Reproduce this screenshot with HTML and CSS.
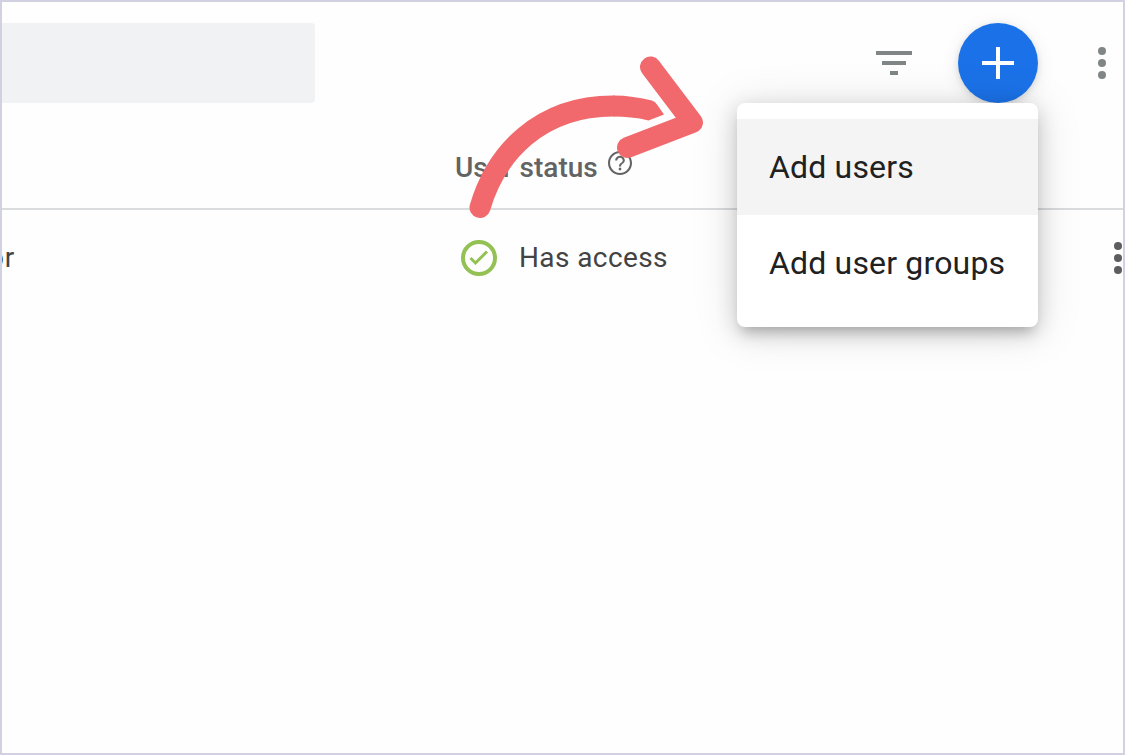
FILE: index.html
```
<!DOCTYPE html>
<html lang="en">
<head>
    <meta charset="UTF-8">
    <title>User management</title>
    <link rel="stylesheet" href="styles.css">
</head>
<body>
<div class="page">
    <div class="toolbar">
        <div class="search"></div>
        <div class="actions">
            <svg class="filter" width="36" height="24" viewBox="0 0 36 24">
                <path d="M0 0h36v4H0zM6 10h24v4H6zM14 20h8v4h-8z"/>
            </svg>
            <div class="add">
                <svg width="32" height="32" viewBox="0 0 32 32">
                    <path d="M14 0h4v14h14v4H18v14h-4V18H0v-4h14z"/>
                </svg>
                <ul class="menu">
                    <li class="current">Add users</li>
                    <li>Add user groups</li>
                </ul>
            </div>
            <svg class="more" width="8" height="32" viewBox="0 0 8 32">
                <circle cx="4" cy="4" r="4"/>
                <circle cx="4" cy="16" r="4"/>
                <circle cx="4" cy="28" r="4"/>
            </svg>
        </div>
    </div>
    <div class="row head">
        <div class="role"></div>
        <div class="status">
            <span class="title">User status</span>
            <svg class="help" width="24" height="24" viewBox="2 2 20 20">
                <path d="M11 18h2v-2h-2v2zm1-16C6.480 2 2 6.480 2 12s4.480 10 10 10 10-4.480 10-10S17.520 2 12 2zm0 18.300c-4.580 0-8.300-3.720-8.300-8.300s3.720-8.300 8.300-8.300 8.300 3.720 8.300 8.300-3.720 8.300-8.300 8.300zm0-14.300c-2.210 0-4 1.790-4 4h1.700c0-1.270 1.030-2.300 2.300-2.300s2.300 1.030 2.300 2.300c0 2-3.150 1.750-3.150 5h1.700c0-2.250 3.150-2.500 3.150-5 0-2.210-1.790-4-4-4z"/>
            </svg>
        </div>
    </div>
    <div class="row user">
        <div class="role"><span>or</span></div>
        <div class="status">
            <svg class="check" width="36" height="36" viewBox="0 0 36 36">
                <circle cx="18" cy="18" r="16"/>
                <path d="M9.500 18l5 5L26 11.500"/>
            </svg>
            <span class="access">Has access</span>
        </div>
        <svg class="more" width="8" height="32" viewBox="0 0 8 32">
            <circle cx="4" cy="4" r="4"/>
            <circle cx="4" cy="16" r="4"/>
            <circle cx="4" cy="28" r="4"/>
        </svg>
    </div>
    <!-- arrow pointing at the menu -->
    <svg class="arrow" width="240" height="166" viewBox="466 54 240 166">
        <path class="line" d="M480 207.500C496 153 540 106 613 106"/>
        <path class="end" d="M613 95.500C627 95.500 640 97.500 652 100.500Q655 101.500 657 104.500L664 114.500L648.500 120.500C637 117.500 625 116.500 613 116.500Z"/>
        <path class="line" d="M650.500 67L692.500 122.500L627.500 147.500"/>
    </svg>
</div>
</body>
</html>
```

FILE: styles.css
```
body, ul, li {
    margin: 0;
    padding: 0;
    list-style: none;
}

svg {
    display: block;
    flex: none;
}

.page {
    box-sizing: border-box;
    position: relative;
    width: 1125px;
    height: 755px;
    border: 2px solid #d2d1e1;
    background: #fefefe;
    overflow: hidden;
    font-family: Roboto, "Liberation Sans", sans-serif;
    font-size: 28px;
    color: #434343;
}

.toolbar {
    display: flex;
    justify-content: space-between;
    padding-top: 21px;
}

.search {
    width: 313px;
    height: 80px;
    border-radius: 0 4px 4px 0;
    background: #f1f2f4;
}

.actions {
    display: flex;
    align-items: center;
    height: 80px;
    padding-right: 17px;
    fill: #808586;
}

.filter {
    margin-right: 46px;
}

.add {
    display: flex;
    align-items: center;
    justify-content: center;
    position: relative;
    width: 80px;
    height: 80px;
    margin-right: 60px;
    border-radius: 50%;
    background: #1b72e8;
    fill: #fff;
    box-shadow: 0 2px 8px -2px rgba(0, 0, 0, .2), 0 4px 20px rgba(0, 0, 0, .08);
}

.menu {
    position: absolute;
    top: 80px;
    right: 0;
    width: 301px;
    padding: 16px 0;
    border-radius: 8px;
    background: #fff;
    box-shadow: 0 10px 12px -6px rgba(0, 0, 0, .2), 0 6px 20px 2px rgba(0, 0, 0, .14), 0 4px 44px 4px rgba(0, 0, 0, .1);
}

.menu li {
    height: 96px;
    padding-left: 32px;
    font-size: 32px;
    line-height: 96px;
    letter-spacing: .17px;
    color: #212121;
    white-space: nowrap;
}

.menu .current {
    background: #f4f4f4;
}

.row {
    display: flex;
    align-items: center;
}

.head {
    height: 105px;
    border-bottom: 2px solid #dadbdd;
}

.user {
    height: 96px;
    fill: #5c5d60;
}

.role {
    width: 453px;
}

.role span {
    display: block;
    margin: -2px 0 0 -14px;
    letter-spacing: .8px;
}

.status {
    display: flex;
    align-items: center;
    width: 659px;
}

.head .status {
    padding-top: 24px;
}

.title {
    font-weight: 500;
    color: #636363;
}

.help {
    margin: -9px 0 0 10px;
    fill: #636363;
}

.check {
    margin: 0 22px 0 6px;
    fill: none;
    stroke: #93c154;
    stroke-width: 4;
}

.check path {
    stroke-width: 3;
}

.access {
    margin-top: -2px;
    letter-spacing: .4px;
}

.arrow {
    position: absolute;
    left: 464px;
    top: 52px;
    fill: #f1696c;
}

.arrow .line {
    fill: none;
    stroke: #f1696c;
    stroke-width: 21;
    stroke-linecap: round;
    stroke-linejoin: round;
}
```
